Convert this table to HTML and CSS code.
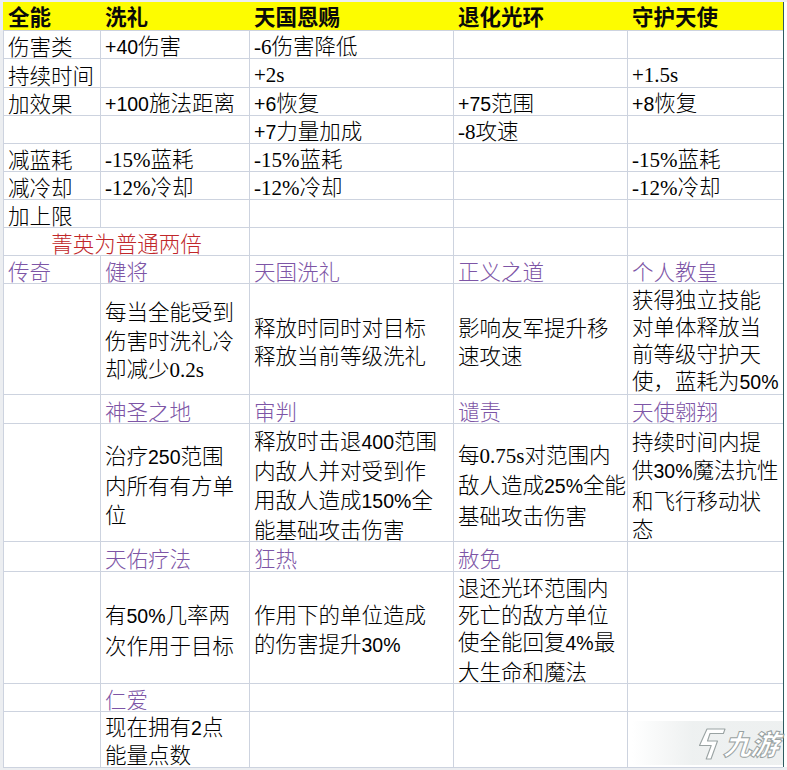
FILE: index.html
```html
<!DOCTYPE html>
<html lang="zh-CN">
<head>
<meta charset="utf-8">
<title>全能 技能表</title>
<link rel="stylesheet" href="styles.css">
</head>
<body>
<div class="sheet">
  <div class="grid">
    <div class="hd">
      <div class="hc">全能</div>
      <div class="hc">洗礼</div>
      <div class="hc">天国恩赐</div>
      <div class="hc">退化光环</div>
      <div class="hc">守护天使</div>
    </div>

    <div class="c"><div class="t">伤害类</div></div>
    <div class="c"><div class="t"><span class="a">+40</span>伤害</div></div>
    <div class="c"><div class="t"><span class="s">-6</span>伤害降低</div></div>
    <div class="c"></div>
    <div class="c"></div>

    <div class="c"><div class="t">持续时间</div></div>
    <div class="c"></div>
    <div class="c"><div class="t"><span class="s">+2s</span></div></div>
    <div class="c"></div>
    <div class="c"><div class="t"><span class="s">+1.5s</span></div></div>

    <div class="c"><div class="t">加效果</div></div>
    <div class="c"><div class="t"><span class="a">+100</span>施法距离</div></div>
    <div class="c"><div class="t"><span class="a">+6</span>恢复</div></div>
    <div class="c"><div class="t"><span class="a">+75</span>范围</div></div>
    <div class="c"><div class="t"><span class="a">+8</span>恢复</div></div>

    <div class="c"></div>
    <div class="c"></div>
    <div class="c"><div class="t"><span class="a">+7</span>力量加成</div></div>
    <div class="c"><div class="t"><span class="s">-8</span>攻速</div></div>
    <div class="c"></div>

    <div class="c"><div class="t">减蓝耗</div></div>
    <div class="c"><div class="t"><span class="s">-15%</span>蓝耗</div></div>
    <div class="c"><div class="t"><span class="s">-15%</span>蓝耗</div></div>
    <div class="c"></div>
    <div class="c"><div class="t"><span class="s">-15%</span>蓝耗</div></div>

    <div class="c"><div class="t">减冷却</div></div>
    <div class="c"><div class="t"><span class="s">-12%</span>冷却</div></div>
    <div class="c"><div class="t"><span class="s">-12%</span>冷却</div></div>
    <div class="c"></div>
    <div class="c"><div class="t"><span class="s">-12%</span>冷却</div></div>

    <div class="c"><div class="t">加上限</div></div>
    <div class="c"></div>
    <div class="c"></div>
    <div class="c"></div>
    <div class="c"></div>

    <div class="c merged red"><div class="t">菁英为普通两倍</div></div>
    <div class="c"></div>
    <div class="c"></div>
    <div class="c"></div>

    <div class="c p"><div class="t">传奇</div></div>
    <div class="c p"><div class="t">健将</div></div>
    <div class="c p"><div class="t">天国洗礼</div></div>
    <div class="c p"><div class="t">正义之道</div></div>
    <div class="c p"><div class="t">个人教皇</div></div>

    <div class="c"></div>
    <div class="c m"><div class="t">每当全能受到<br>伤害时洗礼冷<br>却减少<span class="s">0.2s</span></div></div>
    <div class="c m"><div class="t">释放时同时对目标<br>释放当前等级洗礼</div></div>
    <div class="c m"><div class="t">影响友军提升移<br>速攻速</div></div>
    <div class="c m tight"><div class="t">获得独立技能<br>对单体释放当<br>前等级守护天<br>使，蓝耗为<span class="a">50%</span></div></div>

    <div class="c"></div>
    <div class="c p"><div class="t">神圣之地</div></div>
    <div class="c p"><div class="t">审判</div></div>
    <div class="c p"><div class="t">谴责</div></div>
    <div class="c p"><div class="t">天使翱翔</div></div>

    <div class="c"></div>
    <div class="c m"><div class="t">治疗<span class="a">250</span>范围<br>内所有有方单<br>位</div></div>
    <div class="c m"><div class="t">释放时击退<span class="a">400</span>范围<br>内敌人并对受到作<br>用敌人造成<span class="a">150%</span>全<br>能基础攻击伤害</div></div>
    <div class="c m"><div class="t">每<span class="s">0.75s</span>对范围内<br>敌人造成<span class="a">25%</span>全能<br>基础攻击伤害</div></div>
    <div class="c m"><div class="t">持续时间内提<br>供<span class="a">30%</span>魔法抗性<br>和飞行移动状<br>态</div></div>

    <div class="c"></div>
    <div class="c p"><div class="t">天佑疗法</div></div>
    <div class="c p"><div class="t">狂热</div></div>
    <div class="c p"><div class="t">赦免</div></div>
    <div class="c"></div>

    <div class="c"></div>
    <div class="c m"><div class="t">有<span class="a">50%</span>几率两<br>次作用于目标</div></div>
    <div class="c m"><div class="t">作用下的单位造成<br>的伤害提升<span class="a">30%</span></div></div>
    <div class="c m tight"><div class="t">退还光环范围内<br>死亡的敌方单位<br>使全能回复<span class="a">4%</span>最<br>大生命和魔法</div></div>
    <div class="c"></div>

    <div class="c"></div>
    <div class="c p"><div class="t">仁爱</div></div>
    <div class="c"></div>
    <div class="c"></div>
    <div class="c"></div>

    <div class="c"></div>
    <div class="c m two"><div class="t">现在拥有<span class="a">2</span>点<br>能量点数</div></div>
    <div class="c"></div>
    <div class="c"></div>
    <div class="c"></div>
  </div>
  <div class="edge"></div>
  <div class="pad"></div>

  <div class="wm">
    <svg class="wm-logo" width="30" height="34" viewBox="0 0 30 34">
      <path d="M10 2 L28 2 L26.4 6.5 L13 6.5 L10.5 14 L20.5 14 L14 32 L9.2 32 L14.2 18.5 L2.5 18.5 Z" fill="#ffffff" stroke="#9aa3a3" stroke-width="1.1" stroke-linejoin="round"/>
    </svg>
    <span class="wm-text">九游</span>
  </div>
</div>
</body>
</html>
```

FILE: styles.css
```css
html, body {
  margin: 0;
  padding: 0;
}

body {
  background: #eceef1;
  width: 787px;
  height: 770px;
  overflow: hidden;
  font-family: "Noto Sans CJK SC", sans-serif;
}

.sheet {
  position: relative;
  display: flex;
  margin: 2px 0 0 3px;
  height: 766px;
}

.grid {
  display: grid;
  grid-template-columns: 96px 148px 203px 173px 155px;
  grid-template-rows: 28px 27px 28px 27px 27px 27px 27px 27px 27px 27px 110px 28px 117px 29px 111px 27px 55px;
  gap: 1px;
  padding: 0 0 1px 1px;
  background: #cdd3df;
  align-self: flex-start;
}

.hd {
  grid-column: 1 / -1;
  display: grid;
  grid-template-columns: 96px 148px 203px 173px 155px;
  gap: 1px;
  background: #fdfc00;
  margin-left: -1px;
  padding-left: 1px;
}

.hc {
  display: flex;
  align-items: center;
  padding: 0 0 0 4px;
  font-size: 21.5px;
  font-weight: 700;
  color: #0a0a0a;
  line-height: 28px;
  white-space: nowrap;
}

.c {
  background: #ffffff;
  display: flex;
  align-items: center;
  padding: 2px 0 0 4px;
  font-size: 21.5px;
  font-weight: 300;
  line-height: 27px;
  color: #000000;
  white-space: nowrap;
  min-width: 0;
}

.t {
  display: block;
}

.c.m {
  line-height: 28.5px;
  padding-top: 4px;
}

.c.m.tight {
  line-height: 27px;
  padding-top: 2px;
}

.c.m.two {
  line-height: 26.5px;
  padding-top: 1px;
}

.c.p {
  color: #7d55a6;
}

.c.red {
  color: #c1272a;
}

.merged {
  grid-column: span 2;
  justify-content: center;
  padding-left: 0;
}

.a {
  font-family: "Liberation Sans", sans-serif;
  font-size: 19.5px;
  font-weight: 400;
}

.s {
  font-family: "Liberation Serif", serif;
  font-size: 21px;
  font-weight: 400;
}

.edge {
  width: 1px;
  height: 765px;
  background: #2e5b60;
}

.pad {
  width: 3px;
  height: 765px;
  background: #ffffff;
}

.wm {
  position: absolute;
  left: 629px;
  top: 719px;
  width: 151px;
  height: 44px;
  display: flex;
  align-items: center;
  justify-content: flex-end;
  gap: 0;
  background: linear-gradient(to right, rgba(238, 240, 240, 0), rgba(236, 239, 239, 0.9) 40%, rgba(236, 239, 239, 0.9));
}

.wm-logo {
  display: block;
  margin-top: 2px;
}

.wm-text {
  display: block;
  font-family: "Noto Sans CJK SC", sans-serif;
  font-size: 28px;
  font-weight: 900;
  line-height: 30px;
  color: #ffffff;
  -webkit-text-stroke: 1px #99a2a2;
  transform: skewX(-18deg);
  letter-spacing: -1px;
  margin-right: 2px;
}
```
